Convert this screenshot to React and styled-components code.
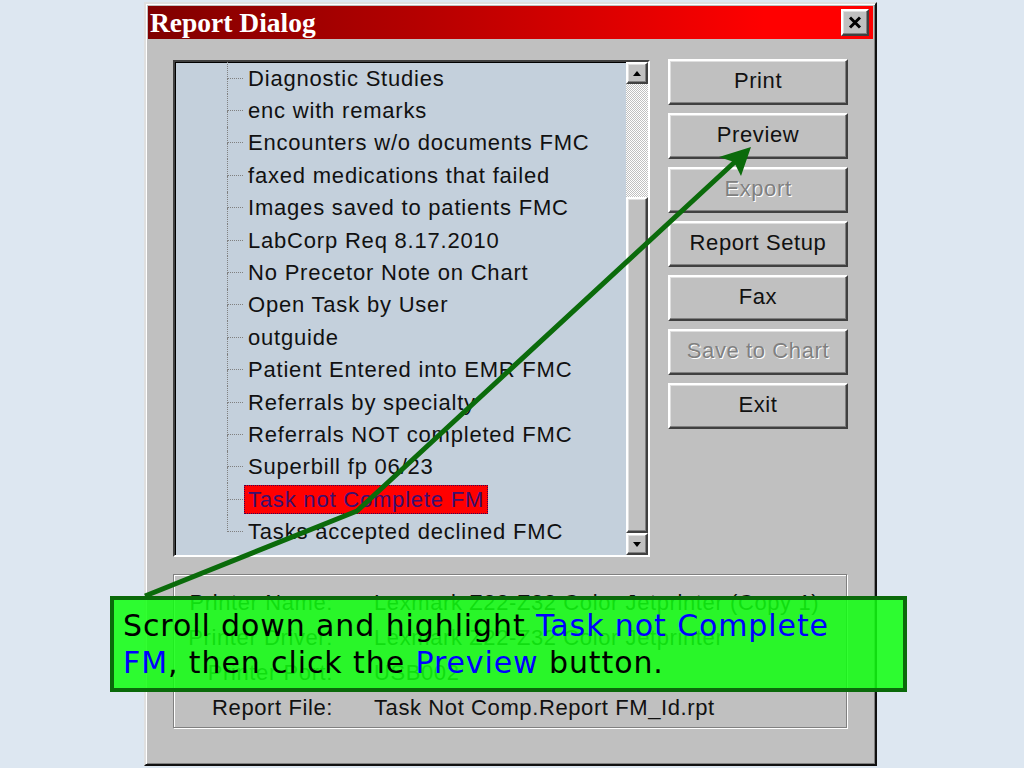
import styled, { createGlobalStyle, css } from 'styled-components';

const GlobalStyle = createGlobalStyle`
  html, body {
    margin: 0;
    padding: 0;
    background: #dde7f1;
  }
  * {
    box-sizing: border-box;
  }
`;

const REPORTS = [
  'Diagnostic Studies',
  'enc with remarks',
  'Encounters w/o documents FMC',
  'faxed medications that failed',
  'Images saved to patients FMC',
  'LabCorp Req 8.17.2010',
  'No Precetor Note on Chart',
  'Open Task by User',
  'outguide',
  'Patient Entered into EMR FMC',
  'Referrals by specialty',
  'Referrals NOT completed FMC',
  'Superbill fp 06/23',
  'Task not Complete FM',
  'Tasks accepted declined FMC',
];

const BUTTONS = [
  { label: 'Print' },
  { label: 'Preview' },
  { label: 'Export', disabled: true },
  { label: 'Report Setup' },
  { label: 'Fax' },
  { label: 'Save to Chart', disabled: true },
  { label: 'Exit' },
];

const INFO = [
  ['Printer Name:', 'Lexmark Z22-Z32 Color Jetprinter (Copy 1)'],
  ['Printer Driver:', 'Lexmark Z22-Z32 Color Jetprinter'],
  ['Printer Port:', 'USB002'],
  ['Report File:', 'Task Not Comp.Report FM_Id.rpt'],
];

const SELECTED = 'Task not Complete FM';

const App = () => {
  return (
    <>
      <GlobalStyle />
      <Page>
        <Dialog>
          <TitleBar>
            <Title>Report Dialog</Title>
            <CloseButton>
              <svg width="14" height="13" viewBox="0 0 14 13">
                <path d="M2 1.5 L12 11.5 M12 1.5 L2 11.5" stroke="#000" strokeWidth="3" />
              </svg>
            </CloseButton>
          </TitleBar>

          <Content>
            <MainRow>
              <ListBox>
                <Tree>
                  {REPORTS.map((name, i) => (
                    <Item key={name}>
                      <Connector>
                        <ConnectorTop />
                        <ConnectorBottom $last={i === REPORTS.length - 1} />
                      </Connector>
                      <Label $selected={name === SELECTED}>{name}</Label>
                    </Item>
                  ))}
                </Tree>
                <ScrollBar>
                  <ScrollButton>
                    <svg width="8" height="5" viewBox="0 0 8 5">
                      <path d="M0 5 L4 0 L8 5 Z" fill="#000" />
                    </svg>
                  </ScrollButton>
                  <Track />
                  <Thumb />
                  <ScrollButton>
                    <svg width="8" height="5" viewBox="0 0 8 5">
                      <path d="M0 0 L8 0 L4 5 Z" fill="#000" />
                    </svg>
                  </ScrollButton>
                </ScrollBar>
              </ListBox>

              <ButtonColumn>
                {BUTTONS.map((b) => (
                  <DialogButton key={b.label} $disabled={b.disabled}>
                    {b.label}
                  </DialogButton>
                ))}
              </ButtonColumn>
            </MainRow>

            <InfoPanel>
              {INFO.map(([label, value]) => (
                <InfoRow key={label}>
                  <InfoLabel>{label}</InfoLabel>
                  <InfoValue>{value}</InfoValue>
                </InfoRow>
              ))}
            </InfoPanel>
          </Content>
        </Dialog>

        <ArrowLayer width="1024" height="768" viewBox="0 0 1024 768">
          <polyline
            points="145,596 357,511 738,159"
            fill="none"
            stroke="#0b6b0b"
            strokeWidth="5"
            strokeLinejoin="round"
          />
          <polygon points="751,147 719,157 734,162 741,176" fill="#0b6b0b" />
        </ArrowLayer>

        <Callout>
          Scroll down and highlight <Hint>Task not Complete</Hint>
          <br />
          <Hint>FM</Hint>, then click the <Hint>Preview</Hint> button.
        </Callout>
      </Page>
    </>
  );
};

export default App;

const raised = css`
  border: 2px solid;
  border-color: #ffffff #404040 #404040 #ffffff;
  box-shadow: inset -1px -1px #808080, inset 1px 1px #dfdfdf;
  background: #c0c0c0;
`;

const Page = styled.div`
  position: relative;
  width: 1024px;
  height: 768px;
  overflow: hidden;
  padding: 2px 0 0 144px;
  font-family: 'Liberation Sans', Arial, sans-serif;
`;

const Dialog = styled.div`
  width: 733px;
  height: 764px;
  padding: 2px;
  background: #c0c0c0;
  border: 2px solid;
  border-color: #dfdfdf #101010 #101010 #dfdfdf;
  box-shadow: inset 1px 1px #ffffff, inset -1px -1px #808080;
  display: flex;
  flex-direction: column;
`;

const TitleBar = styled.div`
  height: 33px;
  display: flex;
  align-items: center;
  justify-content: space-between;
  padding: 0 4px 0 2px;
  background: linear-gradient(to right, #800000 0%, #c00000 45%, #ff0000 85%, #ff0000 100%);
`;

const Title = styled.span`
  font-family: 'Liberation Serif', 'Times New Roman', serif;
  font-weight: bold;
  font-size: 27.5px;
  line-height: 33px;
  color: #ffffff;
`;

const CloseButton = styled.div`
  ${raised};
  width: 28px;
  height: 27px;
  display: flex;
  align-items: center;
  justify-content: center;
`;

const Content = styled.div`
  padding: 21px 0 0 25px;
  display: flex;
  flex-direction: column;
`;

const MainRow = styled.div`
  display: flex;
  gap: 18px;
  align-items: flex-start;
`;

const ListBox = styled.div`
  width: 477px;
  height: 497px;
  display: flex;
  border: 2px solid;
  border-color: #404040 #ffffff #ffffff #404040;
  box-shadow: inset 1px 1px #000000;
  background: #c4d0dc;
`;

const Tree = styled.div`
  flex: 1;
  padding: 0 0 0 52px;
  display: flex;
  flex-direction: column;
`;

const Item = styled.div`
  height: 32.4px;
  display: flex;
  align-items: stretch;
`;

const Connector = styled.div`
  width: 16px;
  display: flex;
  flex-direction: column;
`;

const ConnectorTop = styled.div`
  flex: 1;
  border-left: 1px dotted #808080;
  border-bottom: 1px dotted #808080;
`;

const ConnectorBottom = styled.div`
  flex: 1;
  border-left: 1px dotted ${({ $last }) => ($last ? 'transparent' : '#808080')};
`;

const Label = styled.span`
  align-self: center;
  margin-left: 1px;
  padding: 0 4px;
  height: 29px;
  line-height: 29px;
  font-size: 22px;
  letter-spacing: 0.8px;
  white-space: nowrap;
  color: #111111;
  ${({ $selected }) =>
    $selected &&
    css`
      background: #ff0000;
      color: #3a1070;
      outline: 1px dotted #400050;
      outline-offset: -1px;
    `}
`;

const ScrollBar = styled.div`
  width: 22px;
  display: flex;
  flex-direction: column;
`;

const ScrollButton = styled.div`
  ${raised};
  height: 22px;
  display: flex;
  align-items: center;
  justify-content: center;
`;

const Track = styled.div`
  height: 113px;
  background: repeating-conic-gradient(#ffffff 0 25%, #c0c0c0 0 50%) 0 0 / 2px 2px;
`;

const Thumb = styled.div`
  ${raised};
  flex: 1;
`;

const ButtonColumn = styled.div`
  width: 180px;
  margin-top: -1px;
  display: flex;
  flex-direction: column;
  gap: 8px;
`;

const DialogButton = styled.div`
  ${raised};
  height: 46px;
  display: flex;
  align-items: center;
  justify-content: center;
  padding-bottom: 2px;
  font-size: 22px;
  letter-spacing: 0.6px;
  color: ${({ $disabled }) => ($disabled ? '#808080' : '#111111')};
  text-shadow: ${({ $disabled }) => ($disabled ? '1px 1px #ffffff' : 'none')};
`;

const InfoPanel = styled.div`
  margin-top: 17px;
  width: 674px;
  height: 154px;
  padding-top: 10px;
  border: 1px solid #808080;
  box-shadow: inset 1px 1px #ffffff, 1px 1px #ffffff;
  display: flex;
  flex-direction: column;
`;

const InfoRow = styled.div`
  height: 35px;
  display: grid;
  grid-template-columns: 159px 1fr;
  column-gap: 41px;
  align-items: center;
  font-size: 22px;
  letter-spacing: 0.6px;
  color: #111111;
  white-space: nowrap;
`;

const InfoLabel = styled.span`
  text-align: right;
`;

const InfoValue = styled.span``;

const ArrowLayer = styled.svg`
  position: absolute;
  left: 0;
  top: 0;
  pointer-events: none;
`;

const Callout = styled.div`
  position: absolute;
  left: 110px;
  top: 596px;
  width: 797px;
  height: 96px;
  padding: 7px 0 0 9px;
  border: 4px solid #0a6a0a;
  background: rgba(16, 255, 16, 0.86);
  font-family: 'Comic Sans MS', 'DejaVu Sans', sans-serif;
  font-size: 30px;
  letter-spacing: 0.9px;
  line-height: 37px;
  color: #000000;
  white-space: nowrap;
`;

const Hint = styled.span`
  color: #0000ff;
`;
